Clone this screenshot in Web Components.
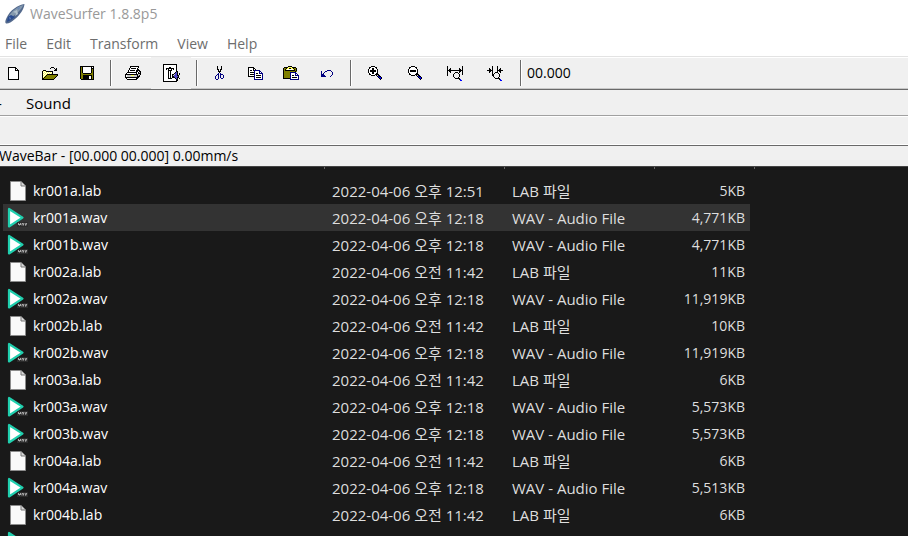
<!DOCTYPE html>
<html lang="ko">
<head>
<meta charset="utf-8">
<title>WaveSurfer 1.8.8p5</title>
<style>
  html, body { height: 100%; margin: 0; }
  body { background: #191919; overflow: hidden; font: 14px/20px "Open Sans", "Noto Sans CJK KR", sans-serif; color: #000; }
</style>
</head>
<body>
<wave-app></wave-app>
<script>
const COLORS = { k: '#000', w: '#fff', y: '#ffff55', o: '#808000', b: '#000080', g: '#c8c8c8', p: '#5046c8', u: '#0000ff', m: '#808080' };
const PIXELS = {
  new: ['kkkkkkkk...','kwwwwwwkk..','kwwwwwwkwk.','kwwwwwwkkkk','kwwwwwwwwwk','kwwwwwwwwwk','kwwwwwwwwwk','kwwwwwwwwwk','kwwwwwwwwwk','kwwwwwwwwwk','kwwwwwwwwwk','kwwwwwwwwwk','kkkkkkkkkkk'],
  open: ['.........kkk....','........k...k.k.','.............kk.','.kkk........kkk.','kywykkkkkkk.....','kwywywywywk.....','kywywywywyk.....','kwywykkkkkkkkkkk','kywykooooooooook','kwykooooooooook.','kykooooooooook..','kkooooooooook...','kkkkkkkkkkkk....'],
  save: ['kkkkkkkkkkkkkk','kokwwwwwwwwkwk','kokwwwwwwwwkkk','kokwwwwwwwwkok','kokwwwwwwwwkok','kokwwwwwwwwkok','kokwwwwwwwwkok','kookkkkkkkkook','kooooooooooook','kookkkkkkkkkok','kookkkkkkwwkok','kookkkkkkwwkok','kookkkkkkwwkok','.kkkkkkkkkkkkk'],
  print: ['.....kkkkkkkkk..','.....kwwwwwwwk..','....kwkkkkkwk...','....kwwwwwwwkk..','...kwkkkkkwkkkk.','...kwwwwwwwkkwkk','..kkkkkkkkkkwkgk','.kwwwwwwwwwkwkkk','kkkkkkkkkkkkkggk','kwggggyyygggkgk.','kwggggggggggkkk.','kkkkkkkkkkkkkk..','.kwwwwwwwwwkk...','..kkkkkkkkkk....'],
  props: ['kkkkkkkkkkkkkk...','kwwwwwwwwwwwwk...','kwwwwwwwwwwwwk...','kwwwwwkkwwwwwk...','kwwkkkkkkkkwwk...','kwwkwkwwkwkwwk...','kwwwwkkkkwwwwk...','kwwwwkwkwwwwwkk..','kwwwwkwkwwwwkpk..','kwwwwkwkwwwkppk.k','kwwwwkwkwkkgppk.k','kwwwwkwkwkgpppkk.','kwwwwkwkwkkppppk.','kwwwwkwkwkkkppkk.','kwwwwkkkkwwwkpk.k','kwwwwwwwwwwwwkk..','kwwwwwwwwwwwwkk..','kkkkkkkkkkkkkk...'],
  cut: ['..k...k..','..k...k..','..k...k..','..kk.kk..','...k.k...','...kkk...','....k....','...b.b...','..bb.bbb.','.b.b.b..b','b..b.b..b','b..b.b..b','b..b..bb.','.bb......'],
  copy: ['kkkkkk.........','kwwwwkk........','kwwwwkwk.......','kwkkwkbbbbbb...','kwwwwwbwwwwbb..','kwkkkkbwwwwbwb.','kwwwwwbwkkwbbbb','kwkkkkbwwwwwwwb','kwwwwwbwkkkkkwb','kkkkkkbwwwwwwwb','......bwkkkkkwb','......bwwwwwwwb','......bbbbbbbbb'],
  paste: ['.....kkkk.......','.kkkkyyyykkkk...','kookyykkyykook..','kokywwwwwwykok..','kokkkkkkkkkkok..','koooooooooooko..','koooooobbbbbb...','koooooobwwwwbb..','koooooobwwwwbwb.','koooooobwkkwbbbb','koooooobwwwwwwwb','koooooobwkkkkkwb','kkkkkkkbwwwwwwwb','.......bbbbbbbbb'],
  undo: ['......bbbb..','b...bb....b.','b..b.......b','b.b........b','bbb........b','bbbb......b.','bbbbb....b..'],
  zoomin: ['...kkkk.......','.kkwwwwkk.....','.kwwkkwwk.....','kwwwkkwwwk....','kwkkkkkkwk....','kwkkkkkkwk....','kwwwkkwwwk....','.kwwkkwwkk....','.kkwwwwkkkk...','...kkkk.kgkk..','.........kukk.','..........kuuk','...........kuk','............k.'],
  zoomout: ['...kkkk.......','.kkwwwwkk.....','.kwwwwwwk.....','kwwwwwwwwk....','kwkkkkkkwk....','kwkkkkkkwk....','kwwwwwwwwk....','.kwwwwwwkk....','.kkwwwwkkkk...','...kkkk.kgkk..','.........kukk.','..........kuuk','...........kuk','............k.'],
  zoomsel: ['k..............k','k..............k','k..k........k..k','k.kk........kk.k','kkkkkkkkkkkkkkkk','k.kk........kk.k','k..k....kkk.k..k','k......k...k...k','k.....k.....k..k','k.....k.....k...','......k.....k...','.......k...k....','........kkkkk...','............ku..','.............uu.'],
  zoomall: ['.....k....k.....','.....k....k.....','..k..k....k..k..','..kk.k....k.kk..','kkkkkk....kkkkkk','..kk.k....k.kk..','..k..k..kkk..k..','.....k.k...k....','.....kk.....k...','.....kk.....k...','......k.....k...','.......k...k....','........kkkkk...','............ku..','.............uu.']
};
function pixelSvg(name) {
  const rows = PIXELS[name], w = Math.max(...rows.map(r => r.length));
  let out = '';
  rows.forEach((row, y) => {
    for (let x = 0; x < row.length;) {
      let n = 1;
      while (row[x + n] === row[x]) n++;
      if (row[x] !== '.') out += `<rect x="${x}" y="${y}" width="${n}" height="1" fill="${COLORS[row[x]]}"/>`;
      x += n;
    }
  });
  return `<svg width="${w}" height="${rows.length}" viewBox="0 0 ${w} ${rows.length}" shape-rendering="crispEdges" aria-hidden="true">${out}</svg>`;
}
function define(tag, markup) {
  customElements.define(tag, class extends HTMLElement {
    constructor() {
      super();
      this.attachShadow({ mode: 'open' }).innerHTML = typeof markup === 'function' ? markup(this) : markup;
    }
  });
}

customElements.define('tool-button', class extends HTMLElement {
  connectedCallback() {
    const root = this.shadowRoot || this.attachShadow({ mode: 'open' });
    root.innerHTML = `<style>
      :host { display: flex; flex: none; width: 36px; }
      :host([wide]) { width: 40px; }
      button { flex: 1; display: grid; place-items: center; padding: 0; border: 0; background: none; }
      :host([active]) button { background: #f0f0f0; }
      svg { display: block; }
    </style><button type="button" aria-label="${this.getAttribute('label')}">${pixelSvg(this.getAttribute('icon'))}</button>`;
  }
});

define('tool-separator', `<style>
  :host { display: block; flex: none; box-sizing: border-box; width: 2px; margin: 3px 3px 3px 5px; border-left: 1px solid #696969; border-right: 1px solid #fff; }
</style>`);

define('title-bar', `<style>
  :host { display: flex; align-items: center; gap: 5px; height: 28px; padding-left: 5px; background: #fff; color: #999; }
  h1 { margin: 0; font: inherit; }
  svg { display: block; }
</style>
<svg width="20" height="20" viewBox="0 0 20 20" aria-hidden="true">
  <path d="M19.500 0C13 1 5 6 1.500 14C0 17 0 19 1 19.500C3 20 6 18.500 10 15C15 11 19 5 19.500 0Z" fill="#53698c"/>
  <path d="M18.500 1C12 3 7 7 4 12L7 13C12 9 16 6 18.500 1Z" fill="#8499ae"/>
  <path d="M3 13L6 11L10 13L6 16L2 18Z" fill="#294b91"/>
  <path d="M8 8L11 9L10 12L13 10L12 6Z" fill="#b1c0cb"/>
  <path d="M12 4L14 6L15 3ZM4 13L6 14L5 16Z" fill="#6987b7"/>
</svg><h1><slot></slot></h1>`);

define('menu-bar', `<style>
  :host { display: flex; align-items: center; box-sizing: border-box; height: 28px; gap: 19px; padding: 4px 0 0 5px; background: #fff; }
  ::slotted(button) { padding: 0; border: 0; background: none; font: inherit; color: #6d6d6d; }
</style><slot></slot>`);

define('tool-bar', `<style>
  :host { display: flex; box-sizing: border-box; height: 34px; background: #f0f0f0; border-top: 1px solid #e3e3e3; border-bottom: 1px solid #696969; box-shadow: inset 0 1px #fff, inset 0 -1px #c8c8c8; }
  output { align-self: center; margin-left: 2px; }
  div { display: flex; gap: 1px; margin-left: -5px; }
</style>
<div>
  <tool-button icon="new" label="New"></tool-button>
  <tool-button icon="open" label="Open"></tool-button>
  <tool-button icon="save" label="Save"></tool-button>
</div>
<tool-separator></tool-separator>
<tool-button icon="print" label="Print"></tool-button>
<tool-button icon="props" label="Properties" active wide></tool-button>
<tool-separator></tool-separator>
<tool-button icon="cut" label="Cut"></tool-button>
<tool-button icon="copy" label="Copy"></tool-button>
<tool-button icon="paste" label="Paste"></tool-button>
<tool-button icon="undo" label="Undo"></tool-button>
<tool-separator></tool-separator>
<tool-button icon="zoomin" label="Zoom in" wide></tool-button>
<tool-button icon="zoomout" label="Zoom out" wide></tool-button>
<tool-button icon="zoomsel" label="Zoom to selection" wide></tool-button>
<tool-button icon="zoomall" label="Zoom out full" wide></tool-button>
<tool-separator></tool-separator>
<output><slot></slot></output>`);

define('sound-pane', `<style>
  :host { display: block; background: #f0f0f0; }
  .head { display: flex; gap: 20px; height: 25px; align-items: center; border-bottom: 1px solid #a0a0a0; }
  .head { font-size: 15px; line-height: 18px; }
  .body { height: 27px; border-top: 1px solid #fff; border-bottom: 1px solid #fff; }
  .dash { flex: none; width: 6px; margin-left: -3px; margin-right: 3px; }
  .status { display: flex; align-items: center; box-sizing: border-box; height: 21px; border-top: 1px solid #696969; }
  .status span { margin-left: -1px; }
</style>
<div class="head"><span class="dash">-</span><span>Sound</span></div>
<div class="body"></div>
<div class="status"><span><slot></slot></span></div>`);

const ICON_LAB = `<svg width="18" height="22" viewBox="0 0 18 22" aria-hidden="true"><path d="M1.500 1.500H12L16.500 6V20.500H1.500Z" fill="#fafafa" stroke="#8c8c8c"/><path d="M12 1.500V6H16.500" fill="#d8d8d8" stroke="#777"/></svg>`;
const ICON_WAV = `<svg width="21" height="22" viewBox="0 0 21 22" aria-hidden="true"><path d="M2 2V19.500L15.500 10.700Z" fill="#fff" stroke="#20cfae" stroke-width="2.200" stroke-linejoin="round"/><rect x="10" y="15" width="11" height="5" fill="#2b2b2b"/><path d="M11.500 16V18M13.500 16V18M12.500 17V18.500M15 18.500V16.500H16.500V18.500M18 16L18.700 18.500L19.800 16" fill="none" stroke="#aaa"/></svg>`;
const PM = '2022-04-06 오후 12:18', AM = '2022-04-06 오전 11:42';
const FILES = [
  ['kr001a.lab', '2022-04-06 오후 12:51', '5KB'], ['kr001a.wav', PM, '4,771KB'], ['kr001b.wav', PM, '4,771KB'],
  ['kr002a.lab', AM, '11KB'], ['kr002a.wav', PM, '11,919KB'], ['kr002b.lab', AM, '10KB'], ['kr002b.wav', PM, '11,919KB'],
  ['kr003a.lab', AM, '6KB'], ['kr003a.wav', PM, '5,573KB'], ['kr003b.wav', PM, '5,573KB'],
  ['kr004a.lab', AM, '6KB'], ['kr004a.wav', PM, '5,513KB'], ['kr004b.lab', AM, '6KB'], ['.wav', '', '']
];
define('file-list', () => `<style>
  :host { display: block; flex: 1; min-height: 0; overflow: hidden; background: #191919; border-top: 1px solid #444; color: #dedede; }
  .ticks { display: grid; grid-template-columns: 325px 180px 150px 100px; height: 10px; }
  .ticks i { height: 2px; border-right: 1px solid #666; }
  table { table-layout: fixed; width: 747px; margin-left: 3px; border-spacing: 0; }
  td { height: 27px; padding: 0; white-space: nowrap; }
  td:nth-child(2), td:nth-child(3) { font-size: 15px; }
  td div { display: flex; align-items: center; height: 27px; color: #fff; }
  .icon { flex: none; width: 26px; padding-left: 4px; }
  .icon svg { display: block; }
  .icon.lab svg { margin-left: 2px; }
  td:last-child { text-align: right; padding-right: 5px; }
  tr.selected { background: #333; }
</style>
<div class="ticks"><i></i><i></i><i></i><i></i></div>
<table aria-label="Files"><colgroup><col style="width:329px"><col style="width:180px"><col style="width:140px"><col></colgroup><tbody>
${FILES.map(([name, date, size], i) => {
  const lab = name.endsWith('.lab');
  return `<tr class="${i === 1 ? 'selected' : ''}"><td><div><span class="icon ${lab ? 'lab' : ''}">${lab ? ICON_LAB : ICON_WAV}</span>${date && name}</div></td><td>${date}</td><td>${!date ? '' : lab ? 'LAB 파일' : 'WAV - Audio File'}</td><td>${size}</td></tr>`;
}).join('')}
</tbody></table>`);

define('wave-app', `<style>:host { display: flex; flex-direction: column; height: 100%; }
  :host > * { flex-shrink: 0; }</style>
<title-bar>WaveSurfer 1.8.8p5</title-bar>
<menu-bar><button type="button">File</button><button type="button">Edit</button><button type="button">Transform</button><button type="button">View</button><button type="button">Help</button></menu-bar>
<tool-bar>00.000</tool-bar>
<sound-pane>WaveBar - [00.000 00.000] 0.00mm/s</sound-pane>
<file-list></file-list>`);
</script>
</body>
</html>
